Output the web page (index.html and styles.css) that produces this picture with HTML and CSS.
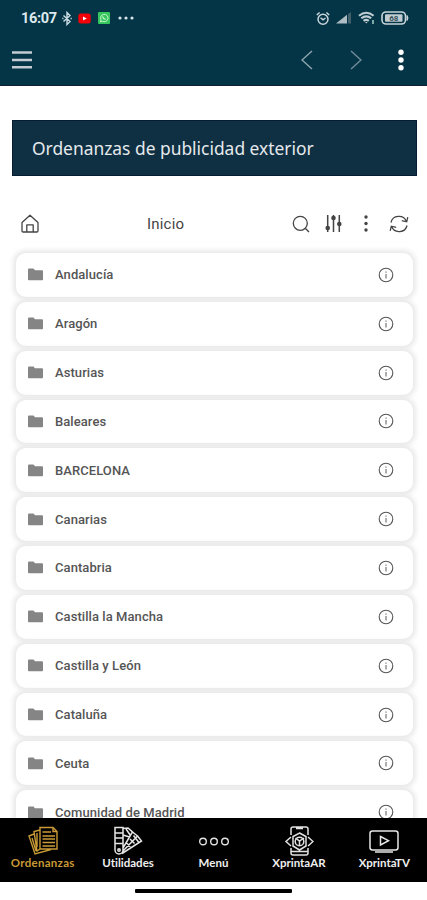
FILE: index.html
```html
<!doctype html>
<html lang="es">
<head>
	<title>Ordenanzas</title>
<meta charset="utf-8">
<link rel="stylesheet" href="styles.css">
</head>
<body>
	<!-- shared icons for the list -->
	<svg class="defs" width="0" height="0">
		<symbol id="folder" viewBox="0 0 15 13"><path d="M0 1.5Q0 .5 1 .5H5.5L7 2.2H14Q15 2.2 15 3.2V11.5Q15 12.3 14 12.3H1Q0 12.3 0 11.5Z" fill="#858585"/></symbol>
		<symbol id="info" viewBox="0 0 16 16"><circle cx="8" cy="8" r="6.8" fill="none" stroke="#555" stroke-width="1.1"/><path d="M8 7V11.5M8 4.4V5.7" stroke="#777" stroke-width="1.2"/></symbol>
	</svg>

	<header>
		<div class="status">
			<span class="clock">16:07</span>
			<svg class="bt" width="10" height="15" viewBox="0 0 10 15" fill="none" stroke="#c9dbe3" stroke-width="1.4"><path d="M1.5 4.5L8 10.5L5 13.5V1.5L8 4.5L1.5 10.5M.3 7.5H1.5M8.5 7.5H9.8"/></svg>
			<svg class="yt" width="13" height="11" viewBox="0 0 13 11"><rect x=".3" y=".5" width="12.4" height="10" rx="2.5" fill="#f30008"/><path d="M5 3.4L8.8 5.5L5 7.6Z" fill="#fff"/></svg>
			<svg class="wa" width="12" height="12" viewBox="0 0 12 12"><rect width="12" height="12" rx="1" fill="#35c75b"/><path d="M2.4 9.8L3 7.7A3.7 3.7 0 1 1 4.4 9.2Z" fill="none" stroke="#c6f2cf" stroke-width="1"/><path d="M4.5 4.3Q5 6.8 7.6 7.4" fill="none" stroke="#c6f2cf" stroke-width="1.2"/></svg>
			<svg width="16" height="4" viewBox="0 0 16 4" fill="#d7e5eb"><circle cx="2" cy="2" r="1.6"/><circle cx="8" cy="2" r="1.6"/><circle cx="14" cy="2" r="1.6"/></svg>
			<div class="system">
				<svg width="14" height="15" viewBox="0 0 14 15" fill="none" stroke="#c9d5da" stroke-width="1.5"><circle cx="7" cy="8.2" r="5"/><path d="M.8 4L3.6 1.5M13.2 4L10.4 1.5M4.6 6.7L7 8.8L9.5 7"/></svg>
				<svg width="16" height="12" viewBox="0 0 16 12"><path d="M0 11.5L11 2.8V11.5Z" fill="#aebdc3"/><path d="M12 2.2L15 0V11.5H12Z" fill="#42616d"/></svg>
				<svg width="17" height="14" viewBox="0 0 17 14" fill="none" stroke="#c0ced3" stroke-width="2.1"><path d="M1 4.7Q8.2-1.2 15.6 4.7M3.3 7.3Q8.2 3.3 13.2 7.3M5.6 9.9Q8.2 7.8 10.8 9.9"/><path d="M7 11L8.3 12.6L9.6 11Z" fill="#c0ced3" stroke="none"/><path d="M15 9V13" stroke="#8ab7b5" stroke-width="1.8"/></svg>
				<svg width="28" height="14" viewBox="0 0 28 14"><rect x="1" y="1" width="23.5" height="12" rx="4" fill="none" stroke="#c9d5da" stroke-width="1.6"/><path d="M26 4.5Q28 7 26 9.5Z" fill="#c9d5da" stroke="#c9d5da"/><rect x="4" y="3.3" width="17.5" height="7.5" rx="1" fill="#c0ccd1"/><text x="12.8" y="10" text-anchor="middle" class="level">68</text></svg>
			</div>
		</div>
		<div class="toolbar">
			<svg class="burger" width="20" height="18" viewBox="0 0 20 18"><path d="M0 1.5H20M0 9H20M0 16.3H20" stroke="#c5cbd2" stroke-width="2.4"/></svg>
			<svg class="prev" width="12" height="20" viewBox="0 0 12 20" fill="none" stroke="#8da5ae" stroke-width="1.5"><path d="M11 1L1 10L11 19"/></svg>
			<svg class="next" width="12" height="20" viewBox="0 0 12 20" fill="none" stroke="#6e8c97" stroke-width="1.5"><path d="M1 1L11 10L1 19"/></svg>
			<svg width="6" height="22" viewBox="0 0 6 22" fill="#fff"><circle cx="3" cy="3.3" r="2.7"/><circle cx="3" cy="11" r="2.7"/><circle cx="3" cy="18.7" r="2.7"/></svg>
		</div>
	</header>

	<main>
		<h1>Ordenanzas de publicidad exterior</h1>
		<div class="tools">
			<svg width="18" height="20" viewBox="0 0 18 20" fill="none" stroke="#444" stroke-width="1.3" stroke-linejoin="round"><path d="M1 8.5L9 1.2L17 8.5V16.8Q17 18 15.8 18H2.2Q1 18 1 16.8ZM5.8 18V10.8H12.2V18"/></svg>
			<span class="where">Inicio</span>
			<svg class="search" width="18" height="18" viewBox="0 0 18 18" fill="none" stroke="#444" stroke-width="1.3"><circle cx="8.3" cy="8.3" r="7"/><path d="M13.2 13.2L17 17"/></svg>
			<svg class="sliders" width="17" height="19" viewBox="0 0 17 19"><path d="M2.7 1V18M8.5 1V18M14.3 1V18" stroke="#444" stroke-width="1.5"/><g fill="#444"><circle cx="2.7" cy="14" r="2.3"/><circle cx="8.5" cy="4" r="2.3"/><circle cx="14.3" cy="10" r="2.3"/></g></svg>
			<svg class="more" width="4" height="17" viewBox="0 0 4 17" fill="#444"><circle cx="2" cy="2" r="1.7"/><circle cx="2" cy="8.5" r="1.7"/><circle cx="2" cy="15" r="1.7"/></svg>
			<svg width="20" height="18" viewBox="0 0 20 18" fill="none" stroke="#444" stroke-width="1.3"><path d="M2 7.5A8 7.5 0 0 1 17.3 6.2M18.8 2.2L17.7 6.8L12.8 5.7M18 10.5A8 7.5 0 0 1 2.7 11.8M1.2 15.8L2.3 11.2L7.2 12.3"/></svg>
		</div>
		<ul class="list">
			<li><svg class="folder"><use href="#folder"/></svg><span>Andalucía</span><svg class="info"><use href="#info"/></svg></li>
			<li><svg class="folder"><use href="#folder"/></svg><span>Aragón</span><svg class="info"><use href="#info"/></svg></li>
			<li><svg class="folder"><use href="#folder"/></svg><span>Asturias</span><svg class="info"><use href="#info"/></svg></li>
			<li><svg class="folder"><use href="#folder"/></svg><span>Baleares</span><svg class="info"><use href="#info"/></svg></li>
			<li><svg class="folder"><use href="#folder"/></svg><span>BARCELONA</span><svg class="info"><use href="#info"/></svg></li>
			<li><svg class="folder"><use href="#folder"/></svg><span>Canarias</span><svg class="info"><use href="#info"/></svg></li>
			<li><svg class="folder"><use href="#folder"/></svg><span>Cantabria</span><svg class="info"><use href="#info"/></svg></li>
			<li><svg class="folder"><use href="#folder"/></svg><span>Castilla la Mancha</span><svg class="info"><use href="#info"/></svg></li>
			<li><svg class="folder"><use href="#folder"/></svg><span>Castilla y León</span><svg class="info"><use href="#info"/></svg></li>
			<li><svg class="folder"><use href="#folder"/></svg><span>Cataluña</span><svg class="info"><use href="#info"/></svg></li>
			<li><svg class="folder"><use href="#folder"/></svg><span>Ceuta</span><svg class="info"><use href="#info"/></svg></li>
			<li><svg class="folder"><use href="#folder"/></svg><span>Comunidad de Madrid</span><svg class="info"><use href="#info"/></svg></li>
		</ul>
	</main>

	<nav>
		<a class="active">
			<svg width="30" height="30" viewBox="0 0 30 30" fill="none" stroke="#c99a35" stroke-width="1.4"><path d="M12 1.5H25L29 5.5V23H12ZM25 1.5V5.5H29M14.5 6H23M14.5 10H27M14.5 13H27M14.5 16.5H27M14.5 20H27M12 4L6 5.5L9 25L12 23M6 8L1 10L7 28L23 23.5M9 7V21M4 12L8 25"/></svg>
			<span>Ordenanzas</span>
		</a>
		<a>
			<svg width="30" height="30" viewBox="0 0 30 30" fill="none" stroke="#e6e6e6" stroke-width="1.5"><path d="M2 1.5H10V24A4 4 0 0 1 2 24ZM2 7H10M2 12H10M2 17.5H10M10 2.5L15 2L19.5 6L10 22M10 9L16.5 11M13 3L17.5 9.5M19.5 6L24.5 10L10 25M13.5 17L17.5 20.5M17 13L21.5 17.5M24.5 10L28.5 15L9 27.5M20.5 9.5L25.5 16"/><circle cx="6" cy="24" r="1.2"/></svg>
			<span>Utilidades</span>
		</a>
		<a>
			<svg width="30" height="30" viewBox="0 0 30 30" fill="none" stroke="#e2e2e2" stroke-width="1.4"><circle cx="4" cy="15.5" r="3.3"/><circle cx="15" cy="15.5" r="3.3"/><circle cx="26" cy="15.5" r="3.3"/></svg>
			<span>Menú</span>
		</a>
		<a>
			<svg width="30" height="30" viewBox="0 0 30 30" fill="none" stroke="#e2e2e2" stroke-width="1.5"><path d="M7 9V3Q7 1 9 1H22Q24 1 24 3V9M7 22V27Q7 29 9 29H22Q24 29 24 27V22M12 2.5H19M7 25.5H24M7 11L2 15.5L7 20M24 11L29 15.5L24 20M15.5 7L22 10.5V20L15.5 24L9 20V10.5ZM11.5 12L15.5 15L20 12M15.5 15V20"/><circle cx="15.5" cy="15.5" r="4.3"/></svg>
			<span>XprintaAR</span>
		</a>
		<a>
			<svg width="30" height="30" viewBox="0 0 30 30" fill="none" stroke="#e6e6e6" stroke-width="1.5"><rect x="1" y="5" width="28" height="19" rx="2.5"/><path d="M11.5 10.5L19.5 14.7L11.5 19ZM6 26H24"/></svg>
			<span>XprintaTV</span>
		</a>
	</nav>
	<div class="gesture"></div>
</body>
</html>
```
FILE: styles.css
```css
* {
	box-sizing: border-box;
}

body {
	margin: 0;
	height: 900px;
	display: flex;
	flex-direction: column;
	overflow: hidden;
	background-color: #fff;
	font-family: Roboto, sans-serif;
}

svg {
	flex: none;
	display: block;
}

.defs {
	position: absolute;
}

header {
	height: 86px;
	flex: none;
	background-color: #033546;
	border-bottom: 1px solid #102235;
}

.status {
	display: flex;
	align-items: center;
	height: 36px;
	padding: 0 18px 0 21px;
}

.clock {
	width: 41px;
	font-size: 14.5px;
	font-weight: 700;
	letter-spacing: -0.3px;
	color: #dde9ee;
}

.yt {
	margin-left: 6px;
}

.wa {
	margin: 0 8px 0 7px;
}

.system {
	display: flex;
	align-items: center;
	gap: 6px;
	margin-left: auto;
}

.level {
	font-size: 8px;
	font-weight: 700;
	fill: #34515d;
}

.toolbar {
	display: flex;
	align-items: center;
	height: 48px;
	padding: 0 23px 0 12px;
}

.prev {
	margin-left: auto;
}

.next {
	margin: 0 36px 0 37px;
}

main {
	flex: 1;
	min-height: 0;
	overflow: hidden;
	padding: 34px 10px 0 12px;
}

h1 {
	height: 56px;
	margin: 0;
	padding-left: 19px;
	border: 1px solid #061b34;
	background-color: #0f2f43;
	color: #e5e9ec;
	font: 400 17.4px/55px "Noto Sans", sans-serif;
}

.tools {
	display: flex;
	align-items: center;
	height: 75px;
	padding: 20px 8px 0 9px;
}

.where {
	margin-left: 108px;
	font-size: 15px;
	letter-spacing: 0.2px;
	color: #444;
}

.search {
	margin-left: auto;
}

.sliders {
	margin: 0 22px 0 15px;
}

.more {
	margin-right: 21px;
}

.list {
	list-style-type: none;
	margin: 0 4px;
	padding: 2px 0 0;
}

.list li {
	display: flex;
	align-items: center;
	height: 43.85px;
	margin-bottom: 5px;
	padding: 0 19px 0 12px;
	border-radius: 10px;
	background-color: #fff;
	box-shadow: 0 0 5px 3px #e9e9e9;
	font-size: 13px;
	font-weight: 500;
	letter-spacing: 0.07px;
	color: #555;
}

.folder {
	width: 15px;
	height: 13px;
	margin-right: 12px;
}

.info {
	width: 16px;
	height: 16px;
	margin-left: auto;
}

nav {
	display: flex;
	height: 64px;
	flex: none;
	background-color: #000;
}

nav a {
	flex: 1;
	display: flex;
	flex-direction: column;
	align-items: center;
	padding-top: 8px;
	color: #eee;
	font: 700 11.5px/14px Lato, sans-serif;
	font-variant-ligatures: none;
}

nav .active {
	color: #c99a35;
	letter-spacing: 0.3px;
}

.gesture {
	flex: none;
	width: 157px;
	height: 4px;
	margin: 7px auto;
	border-radius: 1px;
	background-color: #000;
}
```
